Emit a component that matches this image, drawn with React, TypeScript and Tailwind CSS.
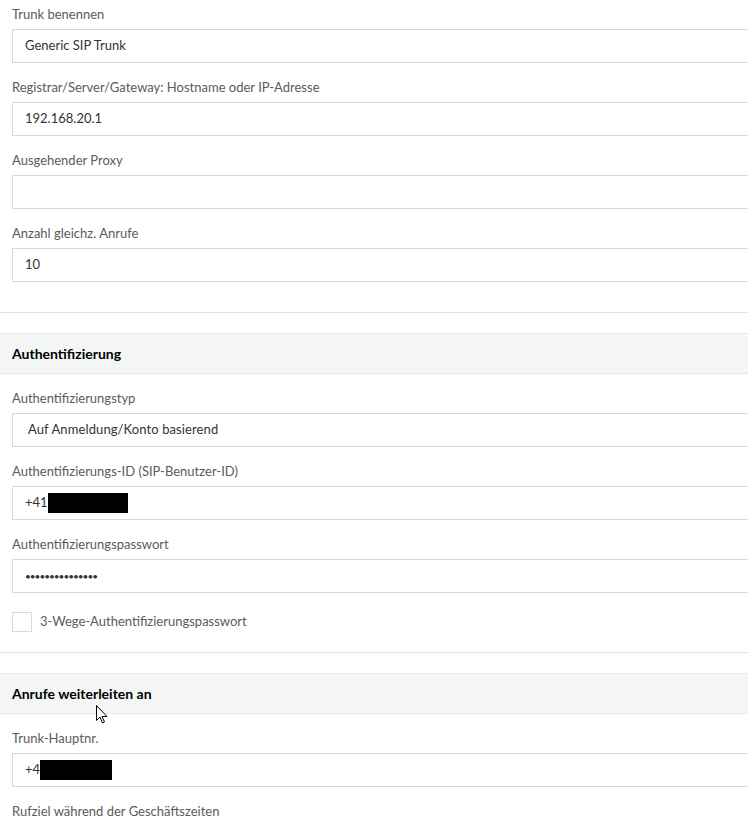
import React from 'react';

const font = { fontFamily: 'Lato, "Open Sans", sans-serif' };

function Field({ label, value, children }: { label: string; value?: string; children?: React.ReactNode }) {
  return (
    <div className="mb-[14px]">
      <label className="block h-5 text-[13px] leading-5 text-[#5b5b5b]">{label}</label>
      <div className="mt-[5px] flex h-[34px] items-center border border-[#d3dbdb] bg-white pl-[12px] text-[13px] text-[#333]">
        {value}
        {children}
      </div>
    </div>
  );
}

function SectionHeader({ title }: { title: string }) {
  return (
    <div className="mt-5 flex h-[41px] items-center border-y border-[#e4e8e8] bg-[#f4f5f5] pl-3 text-[14px] font-bold text-black">
      {title}
    </div>
  );
}

export default function App() {
  return (
    <div className="relative h-[823px] w-[748px] overflow-hidden bg-white" style={font}>
      <div className="w-[820px]">
        <div className="border-b border-[#dde2e2] px-3 pt-1 pb-4">
          <Field label="Trunk benennen" value="Generic SIP Trunk" />
          <Field label="Registrar/Server/Gateway: Hostname oder IP-Adresse" value="192.168.20.1" />
          <Field label="Ausgehender Proxy" value="" />
          <Field label="Anzahl gleichz. Anrufe" value="10" />
        </div>

        <SectionHeader title="Authentifizierung" />
        <div className="border-b border-[#dde2e2] px-3 pt-[14px] pb-5">
          <Field label="Authentifizierungstyp">
            <span className="pl-[3px] tracking-[0.1px]">Auf Anmeldung/Konto basierend</span>
          </Field>
          <Field label="Authentifizierungs-ID (SIP-Benutzer-ID)">
            <span>+41</span>
            <span className="inline-block h-5 w-20 bg-black" />
          </Field>
          <Field label="Authentifizierungspasswort">
            <span className="text-[10px] tracking-[-1px]">•••••••••••••••</span>
          </Field>
          <div className="mt-[19px] flex items-center gap-2">
            <span className="inline-block h-5 w-5 border border-[#d3dbdb] bg-white" />
            <span className="text-[13px] text-[#5b5b5b]">3-Wege-Authentifizierungspasswort</span>
          </div>
        </div>

        <SectionHeader title="Anrufe weiterleiten an" />
        <div className="px-3 pt-[14px]">
          <Field label="Trunk-Hauptnr.">
            <span>+4</span>
            <span className="inline-block h-5 w-[72px] bg-black" />
          </Field>
          <label className="block h-5 text-[13px] leading-5 text-[#5b5b5b]">Rufziel während der Geschäftszeiten</label>
        </div>
      </div>

      <svg className="absolute left-[96px] top-[705px]" width="12" height="19" viewBox="0 0 12 19">
        <path d="M0.5 0.5 L0.5 15.5 L4 12 L6.5 18 L8.5 17 L6 11.5 L11 11.5 Z" fill="white" stroke="black" strokeWidth="1" />
      </svg>
    </div>
  );
}
